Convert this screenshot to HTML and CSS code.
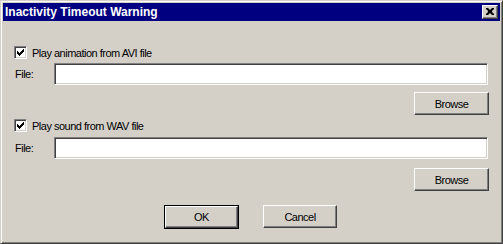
FILE: index.html
```html
<!DOCTYPE html>
<html>
<head>
  <link rel="stylesheet" href="styles.css">
</head>
<body>
  <div class="window">
    <div class="title-bar">
      <div class="title-text">Inactivity Timeout Warning</div>
      <div class="close-btn">
        <svg width="8" height="7" viewBox="0 0 8 7">
          <path d="M0 0h2l2 2 2-2h2v1l-2 2v1l2 2v1h-2l-2-2-2 2h-2v-1l2-2v-1l-2-2z" fill="#000"/>
        </svg>
      </div>
    </div>

    <div class="content">
      <!-- AVI section -->
      <div class="check-row first">
        <span class="checkbox">
          <svg width="7" height="7" viewBox="0 0 7 7"><path d="M0 2h1v1h1v1h1v-1h1v-1h1v-1h1v-1h1v3h-1v1h-1v1h-1v1h-1v1h-1v-1h-1v-1h-1z" fill="#000"/></svg>
        </span>
        <span class="check-label">Play animation from AVI file</span>
      </div>
      <div class="file-row">
        <span class="file-label">File:</span>
        <div class="text-input"></div>
      </div>
      <div class="browse-row">
        <div class="button">Browse</div>
      </div>

      <!-- WAV section -->
      <div class="check-row second">
        <span class="checkbox">
          <svg width="7" height="7" viewBox="0 0 7 7"><path d="M0 2h1v1h1v1h1v-1h1v-1h1v-1h1v-1h1v3h-1v1h-1v1h-1v1h-1v1h-1v-1h-1v-1h-1z" fill="#000"/></svg>
        </span>
        <span class="check-label">Play sound from WAV file</span>
      </div>
      <div class="file-row second">
        <span class="file-label">File:</span>
        <div class="text-input"></div>
      </div>
      <div class="browse-row second">
        <div class="button">Browse</div>
      </div>

      <div class="dialog-buttons">
        <div class="default-wrap"><div class="button">OK</div></div>
        <div class="button cancel">Cancel</div>
      </div>
    </div>
  </div>
</body>
</html>
```

FILE: styles.css
```css
body {
  margin: 0;
  font-family: "Liberation Sans", Arial, sans-serif;
  font-size: 11px;
  letter-spacing: -0.5px;
  color: #000;
  background: #d4d0c8;
}
.window {
  width: 503px;
  height: 244px;
  box-sizing: border-box;
  background: #d4d0c8;
  border: 1px solid;
  border-color: #d4d0c8 #404040 #404040 #d4d0c8;
  box-shadow: inset 1px 1px #fff, inset -1px -1px #808080;
  padding: 2px;
  display: flex;
  flex-direction: column;
}
.title-bar {
  height: 18px;
  background: #000080;
  display: flex;
  align-items: center;
  justify-content: space-between;
  padding: 0 2px 0 2px;
}
.title-text {
  color: #fff;
  font-weight: bold;
  font-size: 12px;
  letter-spacing: 0;
}
.close-btn {
  width: 16px;
  height: 14px;
  box-sizing: border-box;
  background: #d4d0c8;
  border: 1px solid;
  border-color: #fff #404040 #404040 #fff;
  box-shadow: inset -1px -1px #808080;
  display: flex;
  align-items: center;
  justify-content: center;
  padding: 0 1px 1px 0;
}
.content {
  padding: 25px 11px 0 11px;
  display: flex;
  flex-direction: column;
}
.check-row {
  display: flex;
  align-items: center;
  height: 13px;
}
.check-row.second {
  margin-top: 4px;
}
.checkbox {
  width: 13px;
  height: 13px;
  box-sizing: border-box;
  background: #fff;
  border: 1px solid;
  border-color: #808080 #fff #fff #808080;
  box-shadow: inset 1px 1px #404040, inset -1px -1px #d4d0c8;
  display: flex;
  align-items: center;
  justify-content: center;
}
.check-label {
  margin-left: 5px;
}
.file-row {
  display: flex;
  align-items: center;
  margin-top: 4px;
}
.file-row.second {
  margin-top: 5px;
}
.file-label {
  width: 39px;
  padding-left: 1px;
}
.text-input {
  flex: 1;
  height: 22px;
  box-sizing: border-box;
  background: #fff;
  border: 1px solid;
  border-color: #808080 #fff #fff #808080;
  box-shadow: inset 1px 1px #404040, inset -1px -1px #d4d0c8;
  margin-right: 1px;
}
.browse-row {
  display: flex;
  justify-content: flex-end;
  margin-top: 7px;
}
.browse-row.second {
  margin-top: 9px;
}
.button {
  width: 75px;
  height: 23px;
  box-sizing: border-box;
  background: #d4d0c8;
  border: 1px solid;
  border-color: #fff #404040 #404040 #fff;
  box-shadow: inset -1px -1px #808080;
  display: flex;
  align-items: center;
  justify-content: center;
}
.dialog-buttons {
  display: flex;
  justify-content: center;
  gap: 24px;
  margin-top: 14px;
  padding-right: 2px;
}
.default-wrap {
  border: 1px solid #000;
}
.default-wrap .button {
  width: 73px;
  height: 22px;
}
.cancel {
  width: 74px;
}
```
